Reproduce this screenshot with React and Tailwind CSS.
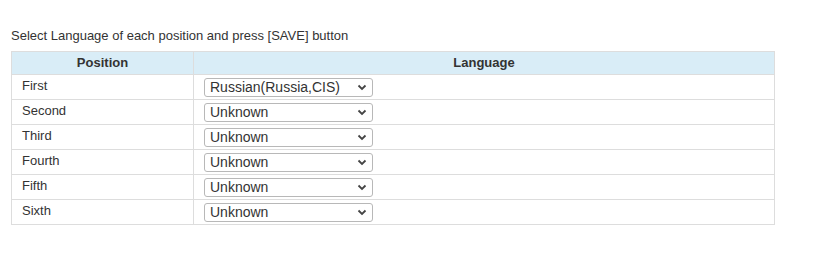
import React from "react";

const rows = [
  ["First", "Russian(Russia,CIS)"],
  ["Second", "Unknown"],
  ["Third", "Unknown"],
  ["Fourth", "Unknown"],
  ["Fifth", "Unknown"],
  ["Sixth", "Unknown"],
];

function Sel({ value }) {
  return (
    <div className="flex h-[19px] w-[169px] items-center justify-between rounded-[3px] border border-[#b8b8b8] bg-white pl-[5px] pr-[5px] text-[14px] leading-none text-[#333]">
      <span>{value}</span>
      <svg width="10" height="7" viewBox="0 0 10 7" className="shrink-0">
        <path d="M1.5 1.5 L5 5 L8.5 1.5" fill="none" stroke="#444" strokeWidth="1.8" />
      </svg>
    </div>
  );
}

export default function App() {
  return (
    <div className="min-h-[277px] w-[822px] bg-white pl-[11px] pt-[28px] text-[13px] text-[#333]" style={{ fontFamily: '"Liberation Sans", Arial, sans-serif' }}>
      <div className="h-[15px] leading-[15px]">Select Language of each position and press [SAVE] button</div>
      <table className="mt-[8px] w-[764px] border-collapse border border-[#ddd]">
        <thead>
          <tr className="h-[23px] bg-[#d9edf7]">
            <th className="w-[182px] border border-[#ddd] p-0 text-center font-bold">Position</th>
            <th className="border border-[#ddd] p-0 text-center font-bold">Language</th>
          </tr>
        </thead>
        <tbody>
          {rows.map(([p, l]) => (
            <tr key={p} className="h-[25px]">
              <td className="border border-[#ddd] py-0 pl-[10px] align-middle">
                <div className="-mt-[2px]">{p}</div>
              </td>
              <td className="border border-[#ddd] py-0 pl-[10px] align-middle">
                <Sel value={l} />
              </td>
            </tr>
          ))}
        </tbody>
      </table>
    </div>
  );
}
